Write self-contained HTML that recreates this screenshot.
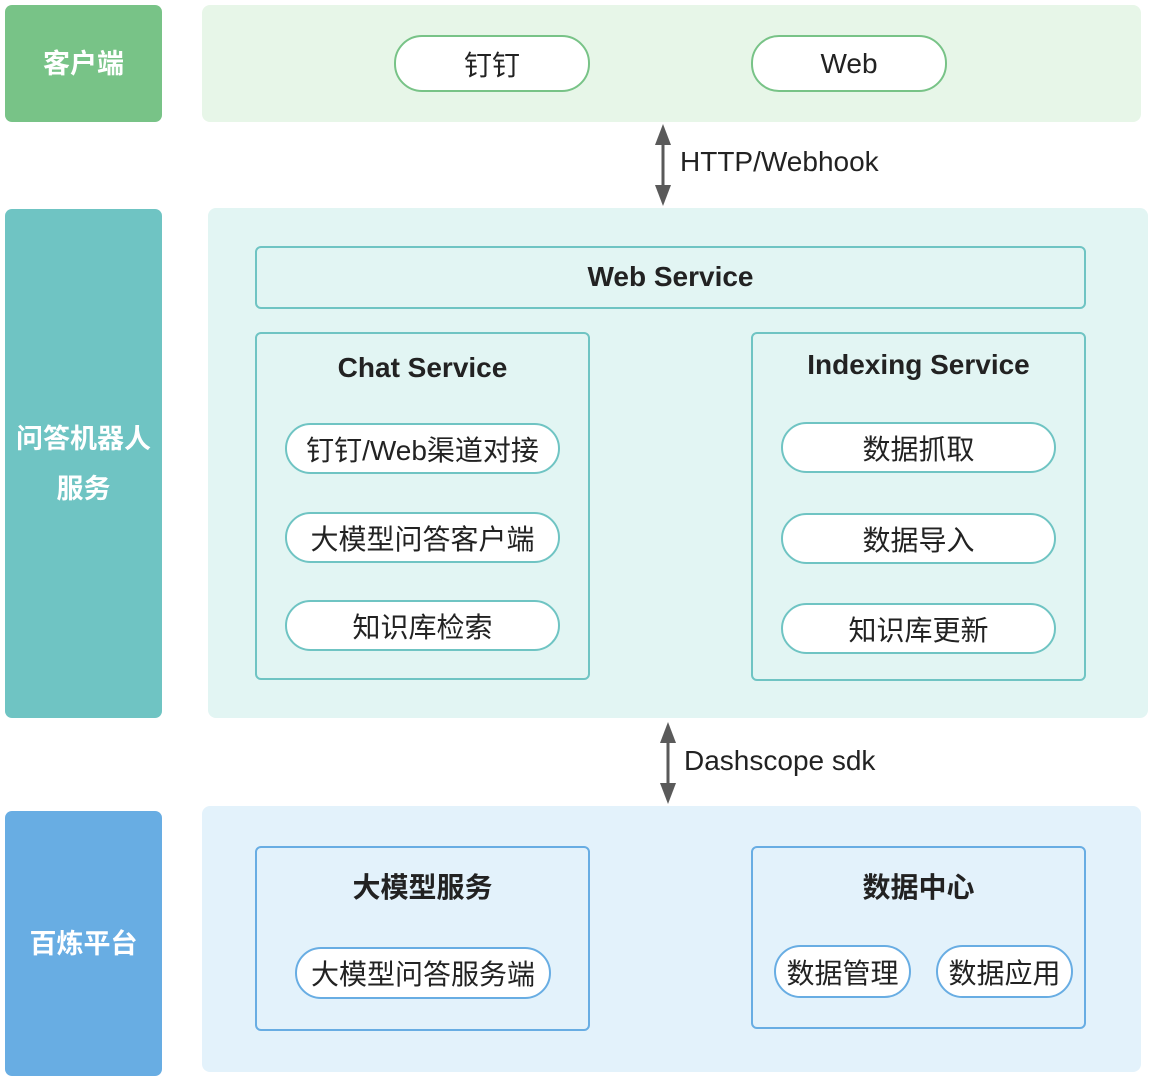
<!DOCTYPE html>
<html><head><meta charset="utf-8">
<style>
*{margin:0;padding:0;box-sizing:border-box}
body{width:1157px;height:1081px;background:#fff;position:relative;overflow:hidden;font-family:"Liberation Sans","Noto Sans CJK SC",sans-serif;color:#222}
.a{position:absolute}
.lab{position:absolute;left:5px;width:157px;border-radius:7px;color:#fff;font-weight:bold;font-size:27px;display:flex;align-items:center;justify-content:center;text-align:center;line-height:50px}
.panel{position:absolute;border-radius:8px}
.box{position:absolute;border:2px solid;border-radius:6px}
.pill{position:absolute;background:#fff;border:2px solid;border-radius:28px;display:flex;align-items:center;justify-content:center;font-size:28px;color:#222}
.t{position:absolute;font-weight:bold;font-size:28px;text-align:center;color:#222;line-height:32px}
.teal{border-color:#6fc4c3}
.blue{border-color:#68ade3}
.green{border-color:#78c387}
.lbl{position:absolute;font-size:28px;color:#222;line-height:32px}
</style></head><body>
<div class="lab" style="top:5px;height:117px;background:#78c387">客户端</div>
<div class="lab" style="top:209px;height:509px;background:#6fc4c3">问答机器人<br>服务</div>
<div class="lab" style="top:811px;height:265px;background:#68ade3">百炼平台</div>

<div class="panel" style="left:202px;top:5px;width:939px;height:117px;background:#e7f6e8"></div>
<div class="pill green" style="left:394px;top:35px;width:196px;height:57px">钉钉</div>
<div class="pill green" style="left:751px;top:35px;width:196px;height:57px">Web</div>

<svg class="a" style="left:653px;top:123px" width="22" height="84"><polygon points="10,1 2,22 18,22" fill="#5a5a5a"/><rect x="8.5" y="20" width="3" height="44" fill="#5a5a5a"/><polygon points="10,83 2,62 18,62" fill="#5a5a5a"/></svg>
<div class="lbl" style="left:680px;top:146px">HTTP/Webhook</div>

<div class="panel" style="left:208px;top:208px;width:940px;height:510px;background:#e2f5f3"></div>
<div class="box teal" style="left:255px;top:246px;width:831px;height:63px"></div>
<div class="t" style="left:255px;top:261px;width:831px">Web Service</div>

<div class="box teal" style="left:255px;top:332px;width:335px;height:348px"></div>
<div class="t" style="left:255px;top:352px;width:335px">Chat Service</div>
<div class="pill teal" style="left:285px;top:423px;width:275px;height:51px">钉钉/Web渠道对接</div>
<div class="pill teal" style="left:285px;top:512px;width:275px;height:51px">大模型问答客户端</div>
<div class="pill teal" style="left:285px;top:600px;width:275px;height:51px">知识库检索</div>

<div class="box teal" style="left:751px;top:332px;width:335px;height:349px"></div>
<div class="t" style="left:751px;top:349px;width:335px">Indexing Service</div>
<div class="pill teal" style="left:781px;top:422px;width:275px;height:51px">数据抓取</div>
<div class="pill teal" style="left:781px;top:513px;width:275px;height:51px">数据导入</div>
<div class="pill teal" style="left:781px;top:603px;width:275px;height:51px">知识库更新</div>

<svg class="a" style="left:658px;top:721px" width="22" height="84"><polygon points="10,1 2,22 18,22" fill="#5a5a5a"/><rect x="8.5" y="20" width="3" height="44" fill="#5a5a5a"/><polygon points="10,83 2,62 18,62" fill="#5a5a5a"/></svg>
<div class="lbl" style="left:684px;top:745px">Dashscope sdk</div>

<div class="panel" style="left:202px;top:806px;width:939px;height:266px;background:#e3f2fb"></div>
<div class="box blue" style="left:255px;top:846px;width:335px;height:185px"></div>
<div class="t" style="left:255px;top:872px;width:335px">大模型服务</div>
<div class="pill blue" style="left:295px;top:947px;width:256px;height:52px">大模型问答服务端</div>

<div class="box blue" style="left:751px;top:846px;width:335px;height:183px"></div>
<div class="t" style="left:751px;top:872px;width:335px">数据中心</div>
<div class="pill blue" style="left:774px;top:945px;width:137px;height:53px">数据管理</div>
<div class="pill blue" style="left:936px;top:945px;width:137px;height:53px">数据应用</div>
</body></html>
